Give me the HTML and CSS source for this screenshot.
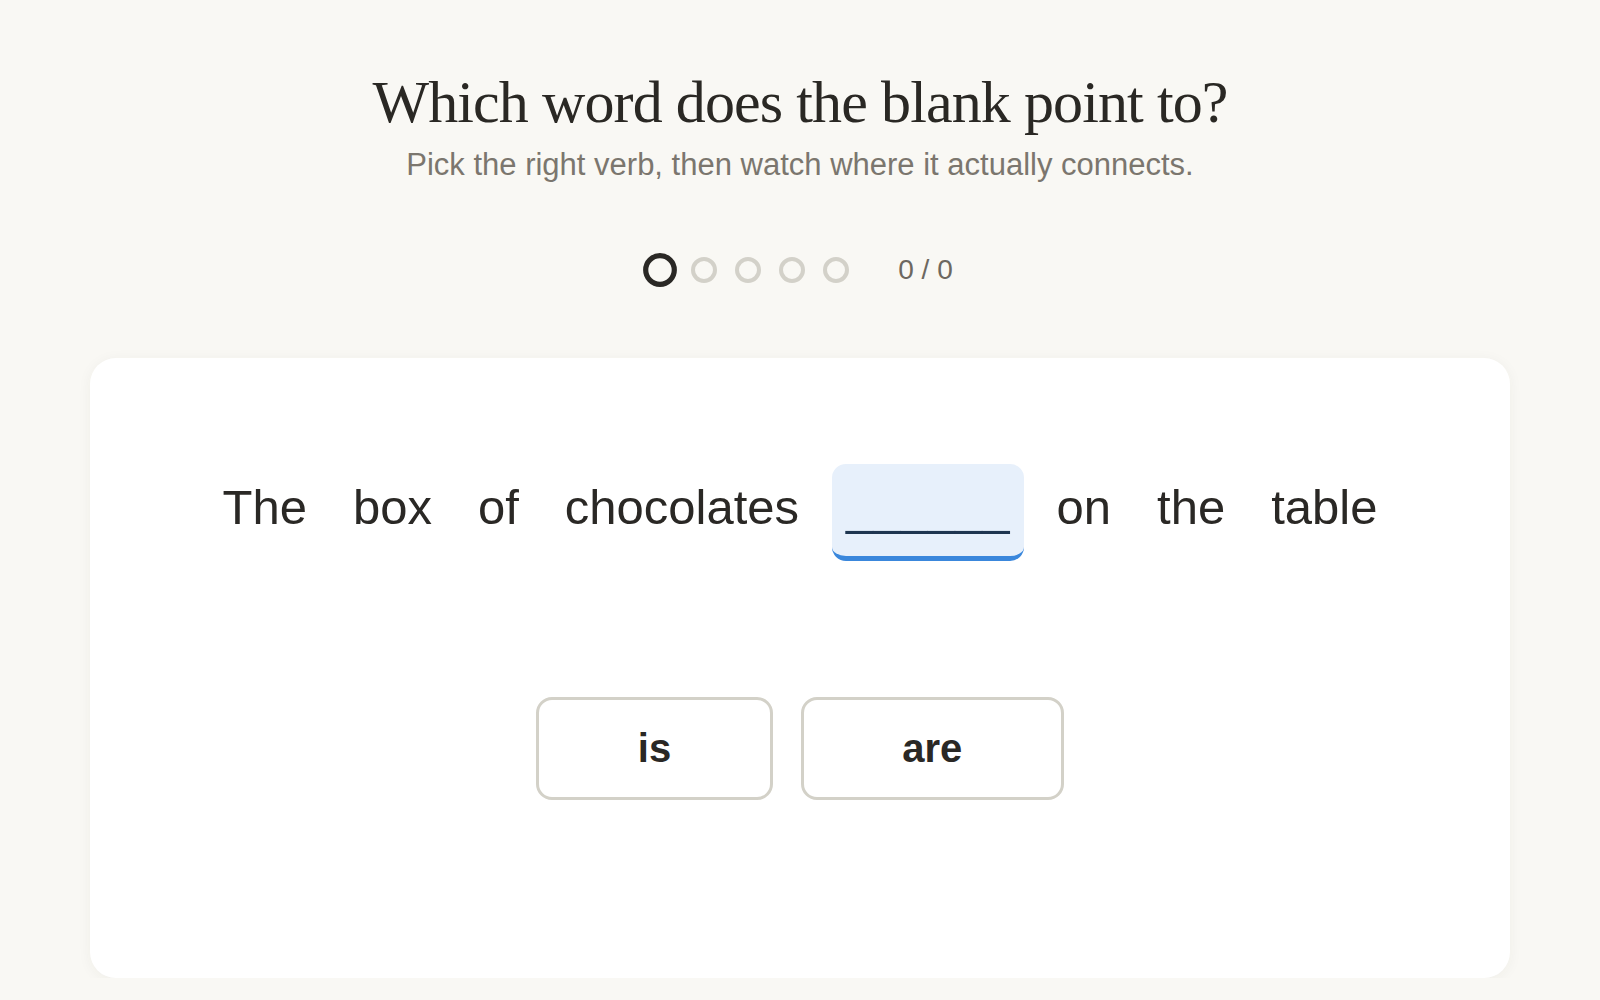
FILE: index.html
```html
<!DOCTYPE html>
<html lang="en">
<head>
<meta charset="utf-8">
<title>Which word does the blank point to?</title>
<link rel="stylesheet" href="styles.css">
</head>
<body>
<main class="page">
  <header class="intro">
    <h1 class="title">Which word does the blank point to?</h1>
    <p class="subtitle">Pick the right verb, then watch where it actually connects.</p>
  </header>

  <div class="progress">
    <span class="dot dot-active"></span>
    <span class="dot"></span>
    <span class="dot"></span>
    <span class="dot"></span>
    <span class="dot"></span>
    <span class="score">0 / 0</span>
  </div>

  <section class="card">
    <div class="sentence">
      <span class="word">The</span>
      <span class="word">box</span>
      <span class="word">of</span>
      <span class="word">chocolates</span>
      <span class="blank">______</span>
      <span class="word">on</span>
      <span class="word">the</span>
      <span class="word">table</span>
    </div>
    <div class="choices">
      <button class="choice" type="button">is</button>
      <button class="choice" type="button">are</button>
    </div>
  </section>
</main>
</body>
</html>
```

FILE: styles.css
```css
* {
  box-sizing: border-box;
}

html, body {
  margin: 0;
  padding: 0;
  background: #f9f8f4;
}

body {
  font-family: "Liberation Sans", Arial, sans-serif;
  color: #2a2825;
}

.page {
  width: 1420px;
  margin: 0 auto;
  padding-top: 68px;
}

.intro {
  text-align: center;
}

.title {
  margin: 0;
  font-family: "Liberation Serif", "Times New Roman", serif;
  font-weight: 400;
  font-size: 60px;
  line-height: 1.15;
  letter-spacing: -0.015em;
  color: #2a2824;
}

.subtitle {
  margin: 10px 0 0;
  font-size: 31px;
  line-height: 1.15;
  color: #7b766e;
}

.progress {
  display: flex;
  align-items: center;
  justify-content: center;
  gap: 18px;
  margin-top: 74px;
  height: 26px;
}

.dot {
  width: 26px;
  height: 26px;
  border-radius: 50%;
  border: 4px solid #d3d1c9;
}

.dot-active {
  border-color: #2a2825;
  transform: scale(1.3);
}

.score {
  margin-left: 31px;
  font-size: 28px;
  line-height: 1;
  color: #6d6860;
}

.card {
  margin-top: 75px;
  background: #ffffff;
  border-radius: 26px;
  box-shadow: 0 2px 14px rgba(60, 50, 30, 0.05);
  padding: 106px 40px 178px;
}

.sentence {
  display: flex;
  align-items: baseline;
  justify-content: center;
  gap: 19px;
  font-size: 49px;
  line-height: 1.15;
  color: #2a2825;
}

.word {
  padding: 0 13.5px;
}

.blank {
  padding: 15px 14.5px 21px;
  background: #e7f0fb;
  border-radius: 14px;
  border-bottom: 5px solid #3a87dc;
  color: #1e3550;
}

.choices {
  display: flex;
  justify-content: center;
  gap: 28px;
  margin-top: 136px;
}

.choice {
  font-family: "Liberation Sans", Arial, sans-serif;
  font-weight: 700;
  font-size: 40px;
  line-height: 1.15;
  color: #2a2825;
  background: #ffffff;
  border: 3px solid #d3d1c8;
  border-radius: 16px;
  padding: 25px 98.5px 26px;
  cursor: pointer;
}
```
